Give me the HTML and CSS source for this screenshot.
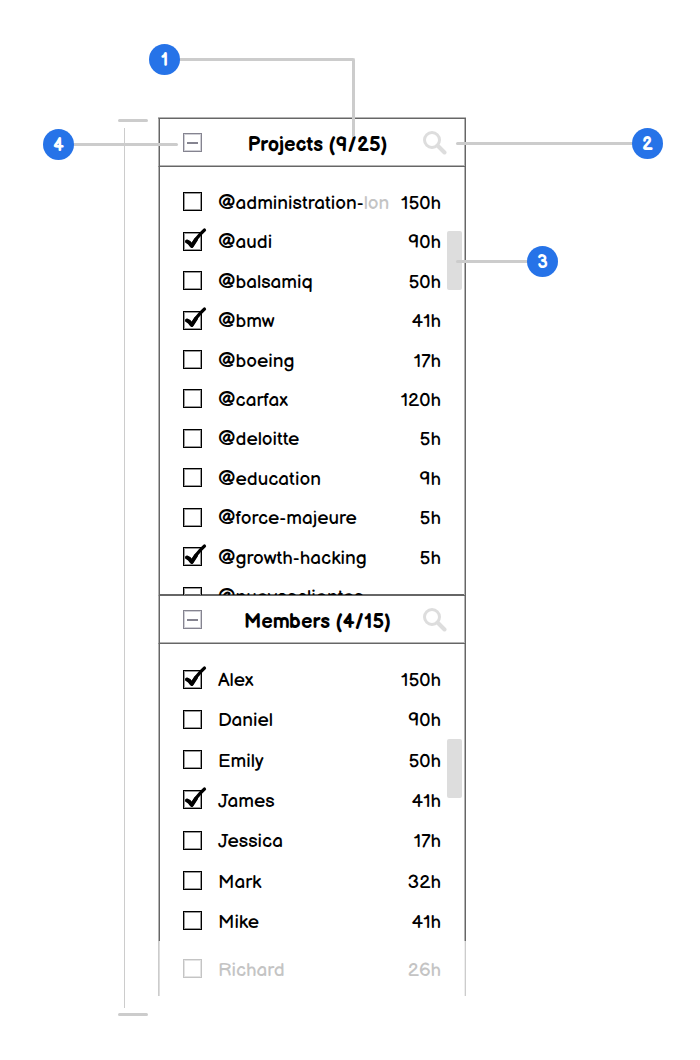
FILE: index.html
```html
<!DOCTYPE html>
<html lang="en">
<head>
    <meta charset="UTF-8">
    <meta name="viewport" content="width=device-width, initial-scale=1.0">
    <title>Projects and Members</title>
    <link rel="stylesheet" href="styles.css">
</head>
<body>
    <svg class="sprite" aria-hidden="true">
        <symbol id="tick" viewBox="0 0 24 24">
            <path d="M4 14.5 C6.5 15 7.5 17 8.8 19 C12 13 16 8 21.5 3" fill="none" stroke="#000" stroke-width="3.2" stroke-linecap="round" stroke-linejoin="round"/>
            <path d="M4 14.5 C6.5 15 7.5 17 8.8 19 L13 12.5" fill="none" stroke="#000" stroke-width="4" stroke-linecap="round" stroke-linejoin="round"/>
        </symbol>
        <symbol id="search" viewBox="0 0 24 24">
            <circle cx="9" cy="9" r="7.5" fill="none" stroke="#ddd" stroke-width="3"/>
            <path d="M14.5 14.5 L21.5 21.5" fill="none" stroke="#ddd" stroke-width="4" stroke-linecap="round"/>
        </symbol>
    </svg>

    <main class="wireframe">
        <div class="bracket"></div>

        <div class="panel">
            <section class="group">
                <header class="group-header edges">
                    <button class="collapse" aria-label="Collapse projects"></button>
                    <h2>Projects (9/25)</h2>
                    <button class="search" aria-label="Search projects"><svg><use href="#search"/></svg></button>
                </header>
                <div class="viewport projects edges">
                    <ul class="list">
                        <li><label class="check"><input type="checkbox"><svg><use href="#tick"/></svg><span>@administration-<span class="cut">lon</span></span></label><span class="hours">150h</span></li>
                        <li><label class="check"><input type="checkbox" checked><svg><use href="#tick"/></svg><span>@audi</span></label><span class="hours">90h</span></li>
                        <li><label class="check"><input type="checkbox"><svg><use href="#tick"/></svg><span>@balsamiq</span></label><span class="hours">50h</span></li>
                        <li><label class="check"><input type="checkbox" checked><svg><use href="#tick"/></svg><span>@bmw</span></label><span class="hours">41h</span></li>
                        <li><label class="check"><input type="checkbox"><svg><use href="#tick"/></svg><span>@boeing</span></label><span class="hours">17h</span></li>
                        <li><label class="check"><input type="checkbox"><svg><use href="#tick"/></svg><span>@carfax</span></label><span class="hours">120h</span></li>
                        <li><label class="check"><input type="checkbox"><svg><use href="#tick"/></svg><span>@deloitte</span></label><span class="hours">5h</span></li>
                        <li><label class="check"><input type="checkbox"><svg><use href="#tick"/></svg><span>@education</span></label><span class="hours">9h</span></li>
                        <li><label class="check"><input type="checkbox"><svg><use href="#tick"/></svg><span>@force-majeure</span></label><span class="hours">5h</span></li>
                        <li><label class="check"><input type="checkbox" checked><svg><use href="#tick"/></svg><span>@growth-hacking</span></label><span class="hours">5h</span></li>
                        <li><label class="check"><input type="checkbox"><svg><use href="#tick"/></svg><span>@nuevosclientes</span></label></li>
                    </ul>
                    <div class="thumb"></div>
                </div>
            </section>

            <section class="group">
                <header class="group-header edges">
                    <button class="collapse" aria-label="Collapse members"></button>
                    <h2>Members (4/15)</h2>
                    <button class="search" aria-label="Search members"><svg><use href="#search"/></svg></button>
                </header>
                <div class="viewport members edges">
                    <ul class="list">
                        <li><label class="check"><input type="checkbox" checked><svg><use href="#tick"/></svg><span>Alex</span></label><span class="hours">150h</span></li>
                        <li><label class="check"><input type="checkbox"><svg><use href="#tick"/></svg><span>Daniel</span></label><span class="hours">90h</span></li>
                        <li><label class="check"><input type="checkbox"><svg><use href="#tick"/></svg><span>Emily</span></label><span class="hours">50h</span></li>
                        <li><label class="check"><input type="checkbox" checked><svg><use href="#tick"/></svg><span>James</span></label><span class="hours">41h</span></li>
                        <li><label class="check"><input type="checkbox"><svg><use href="#tick"/></svg><span>Jessica</span></label><span class="hours">17h</span></li>
                        <li><label class="check"><input type="checkbox"><svg><use href="#tick"/></svg><span>Mark</span></label><span class="hours">32h</span></li>
                        <li><label class="check"><input type="checkbox"><svg><use href="#tick"/></svg><span>Mike</span></label><span class="hours">41h</span></li>
                    </ul>
                    <div class="thumb"></div>
                </div>
                <ul class="list faded edges">
                    <li><label class="check"><input type="checkbox"><svg><use href="#tick"/></svg><span>Richard</span></label><span class="hours">26h</span></li>
                </ul>
            </section>

            <!-- callouts -->
            <div class="line line-1"></div>
            <div class="line line-2"></div>
            <div class="line line-3"></div>
            <div class="line line-4"></div>
            <span class="pin pin-1">1</span>
            <span class="pin pin-2">2</span>
            <span class="pin pin-3">3</span>
            <span class="pin pin-4">4</span>
        </div>
    </main>
</body>
</html>
```
FILE: styles.css
```css
* {
    box-sizing: border-box;
}

body {
    margin: 0;
    background-color: #fff;
    color: #000;
    font-family: "Balsamiq Sans", Lato, sans-serif;
    font-size: 19px;
    line-height: 24px;
}

.sprite {
    display: none;
}

.wireframe {
    display: grid;
    grid-template-columns: 30px minmax(0, 1fr);
    gap: 10px;
    padding: 118px 234px 44px 118px;
}

/* Height bracket on the left */
.bracket {
    display: flex;
    flex-direction: column;
    justify-content: space-between;
    margin-bottom: -20px;
    background: linear-gradient(#ccc, #ccc) 6px 10px / 1px calc(100% - 18px) no-repeat;
}

.bracket::before,
.bracket::after {
    content: "";
    height: 3px;
    margin-top: 1px;
    border-radius: 2px;
    background-color: #ccc;
}

.panel {
    position: relative;
}

/* Soft two-tone side borders */
.edges {
    border: 0 solid #666;
    border-left: 1px solid #b4b4b4;
    border-right-width: 1px;
    box-shadow: inset 1px 0 #666, inset -1px 0 #b4b4b4;
}

.group-header {
    display: flex;
    align-items: center;
    height: 49px;
    padding: 0 18px 0 24px;
    border-top-width: 1px;
    border-bottom-width: 1px;
    box-shadow: inset 1px 0 #666, inset -1px 0 #b4b4b4, inset 0 -1px #b4b4b4, 0 -1px #b4b4b4;
}

.group + .group .group-header {
    height: 50px;
    margin-top: -1px;
    border-top-width: 2px;
    box-shadow: inset 1px 0 #666, inset -1px 0 #b4b4b4, inset 0 -1px #b4b4b4;
}

h2 {
    flex: 1;
    margin: 0;
    padding: 4px 0 0 10px;
    font-size: 20px;
    font-weight: bold;
    text-align: center;
    white-space: nowrap;
}

button {
    padding: 0;
    border: none;
    background: none;
    cursor: pointer;
}

.collapse {
    display: grid;
    place-items: center;
    width: 19px;
    height: 19px;
    border: 1px solid #858490;
    box-shadow: inset 0 0 0 1px #d0d0d6;
}

.collapse::before {
    content: "";
    width: 11px;
    height: 2px;
    background-color: #858490;
}

.search svg {
    display: block;
    width: 24px;
    height: 24px;
}

.viewport {
    position: relative;
    overflow: hidden;
    padding-top: 15px;
}

.projects {
    height: 428px;
}

.members {
    height: 297px;
}

.list {
    display: grid;
    grid-auto-rows: 1fr;
    margin: 0;
    padding: 0 24px;
    list-style: none;
}

.projects .list {
    height: 434px;
}

.members .list {
    height: 282px;
}

.list li {
    display: flex;
    align-items: center;
    justify-content: space-between;
}

.check {
    position: relative;
    display: flex;
    align-items: center;
    gap: 16px;
    white-space: nowrap;
}

.check > span,
.hours {
    padding-top: 4px;
}

.check input {
    appearance: none;
    width: 19px;
    height: 19px;
    margin: 0;
    border: 1px solid #000;
    box-shadow: inset 0 0 0 1px #999;
}

.check svg {
    position: absolute;
    left: 0;
    bottom: 4px;
    display: none;
    width: 24px;
    height: 24px;
    pointer-events: none;
}

.check input:checked + svg {
    display: block;
}

.cut {
    color: #c4c4c4;
}

.thumb {
    position: absolute;
    top: 64px;
    right: 3px;
    width: 15px;
    height: 59px;
    border-radius: 2px;
    background-color: #ddd;
}

.members .thumb {
    top: 95px;
}

.faded {
    height: 55px;
    border-color: #ccc;
    box-shadow: inset 1px 0 #ddd, inset -1px 0 #eee;
    color: #c4c4c4;
}

.faded .check input {
    border-color: #c4c4c4;
    box-shadow: inset 0 0 0 1px #e4e4e4;
}

/* Callouts */
.line {
    position: absolute;
    height: 3px;
    border-radius: 2px;
    background-color: #ccc;
}

.line-1 {
    top: -60px;
    left: 20px;
    width: 177px;
    height: 79px;
    border: solid #ccc;
    border-width: 3px 3px 0 0;
    background: none;
}

.line-2 {
    top: 24px;
    left: calc(100% - 10px);
    width: 180px;
}

.line-3 {
    top: 142px;
    left: calc(100% - 10px);
    width: 75px;
}

.line-4 {
    top: 25px;
    left: -90px;
    width: 110px;
}

.pin {
    position: absolute;
    width: 31px;
    height: 31px;
    border-radius: 50%;
    background-color: #2673e8;
    color: #fff;
    font-size: 18px;
    font-weight: bold;
    line-height: 34px;
    text-align: center;
}

.pin-1 {
    top: -74px;
    left: -9px;
}

.pin-2 {
    top: 10px;
    left: calc(100% + 166px);
}

.pin-3 {
    top: 128px;
    left: calc(100% + 61px);
}

.pin-4 {
    top: 11px;
    left: -115px;
}
```
